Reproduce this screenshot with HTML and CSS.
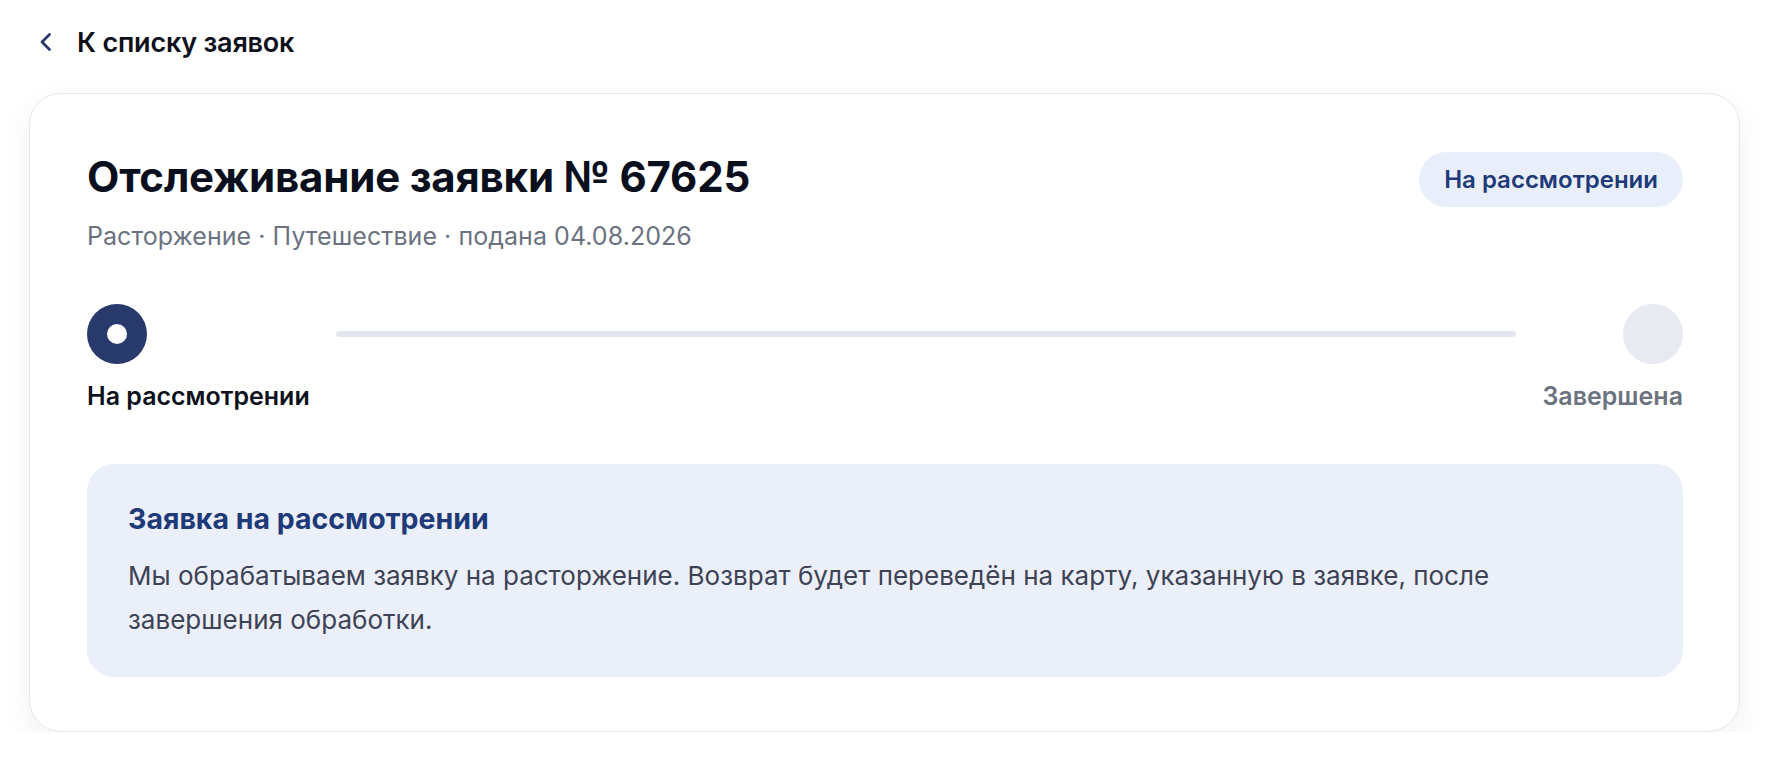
FILE: index.html
```html
<!DOCTYPE html>
<html lang="ru">
<head>
<meta charset="utf-8">
<title>Отслеживание заявки № 67625</title>
<link rel="stylesheet" href="styles.css">
</head>
<body>
<div class="page">
  <a class="back" href="#">
    <svg class="back-icon" width="14" height="20" viewBox="0 0 14 20" aria-hidden="true">
      <path d="M10.5 2.5 L3 10 L10.5 17.5" fill="none" stroke="currentColor" stroke-width="2.8" stroke-linecap="round" stroke-linejoin="round"/>
    </svg>
    <span>К списку заявок</span>
  </a>

  <section class="card">
    <div class="card-head">
      <div class="head-text">
        <h1 class="title">Отслеживание заявки № 67625</h1>
        <div class="subtitle">Расторжение · Путешествие · подана 04.08.2026</div>
      </div>
      <span class="badge">На рассмотрении</span>
    </div>

    <div class="stepper">
      <div class="step step-first">
        <span class="dot dot-active"><span class="dot-inner"></span></span>
        <span class="step-label step-label-active">На рассмотрении</span>
      </div>
      <div class="track"></div>
      <div class="step step-last">
        <span class="dot dot-idle"></span>
        <span class="step-label">Завершена</span>
      </div>
    </div>

    <div class="info">
      <div class="info-title">Заявка на рассмотрении</div>
      <p class="info-text">Мы обрабатываем заявку на расторжение. Возврат будет переведён на карту, указанную в заявке, после завершения обработки.</p>
    </div>
  </section>
</div>
</body>
</html>
```

FILE: styles.css
```css
* { box-sizing: border-box; }

html, body {
  margin: 0;
  background: #ffffff;
}

body {
  font-family: Inter, "Noto Sans", "Liberation Sans", sans-serif;
  color: #0d111c;
}

.page {
  padding: 27px 38px 0 29px;
}

.back {
  display: inline-flex;
  align-items: center;
  gap: 24px;
  margin-left: 10px;
  height: 30px;
  color: #0d111c;
  text-decoration: none;
  font-size: 27px;
  font-weight: 600;
  letter-spacing: -0.2px;
}

.back-icon {
  color: #2a3a6b;
  flex: none;
}

.card {
  margin-top: 36px;
  background: #ffffff;
  border: 1px solid #e4e7ee;
  border-radius: 32px;
  box-shadow: 0 10px 32px rgba(20, 30, 60, 0.06);
  padding: 58px 56px 54px 57px;
}

.card-head {
  display: flex;
  justify-content: space-between;
  align-items: flex-start;
}

.title {
  margin: 0;
  font-size: 42px;
  line-height: 50px;
  font-weight: 700;
  color: #0a0f1e;
  letter-spacing: -0.2px;
}

.subtitle {
  margin-top: 18px;
  font-size: 25px;
  line-height: 32px;
  color: #6b7280;
  letter-spacing: 0.05px;
}

.badge {
  display: inline-flex;
  align-items: center;
  height: 55px;
  padding: 0 25px;
  border-radius: 28px;
  background: #e9effa;
  color: #1e3a78;
  font-size: 24px;
  font-weight: 600;
}

.stepper {
  display: flex;
  align-items: flex-start;
  margin-top: 52px;
}

.step {
  display: flex;
  flex-direction: column;
  gap: 16px;
}

.step-first { align-items: flex-start; }
.step-last { align-items: flex-end; }

.dot {
  width: 60px;
  height: 60px;
  border-radius: 50%;
  display: flex;
  align-items: center;
  justify-content: center;
}

.dot-active { background: #283a6b; }
.dot-idle { background: #e8eaf2; }

.dot-inner {
  width: 20px;
  height: 20px;
  border-radius: 50%;
  background: #ffffff;
}

.step-label {
  font-size: 25px;
  line-height: 32px;
  font-weight: 600;
  color: #6b7280;
  white-space: nowrap;
}

.step-label-active { color: #0d111c; }

.track {
  flex: 1;
  height: 6px;
  margin: 27px 26px 0;
  border-radius: 3px;
  background: #e3e6ee;
}

.info {
  margin-top: 52px;
  background: #ebeffa;
  border-radius: 27px;
  padding: 38px 41px 35px;
}

.info-title {
  font-size: 28.5px;
  line-height: 34px;
  font-weight: 700;
  color: #1e3a78;
}

.info-text {
  margin: 18px 0 0;
  max-width: 1440px;
  font-size: 26px;
  line-height: 44px;
  color: #3d4354;
}
```
